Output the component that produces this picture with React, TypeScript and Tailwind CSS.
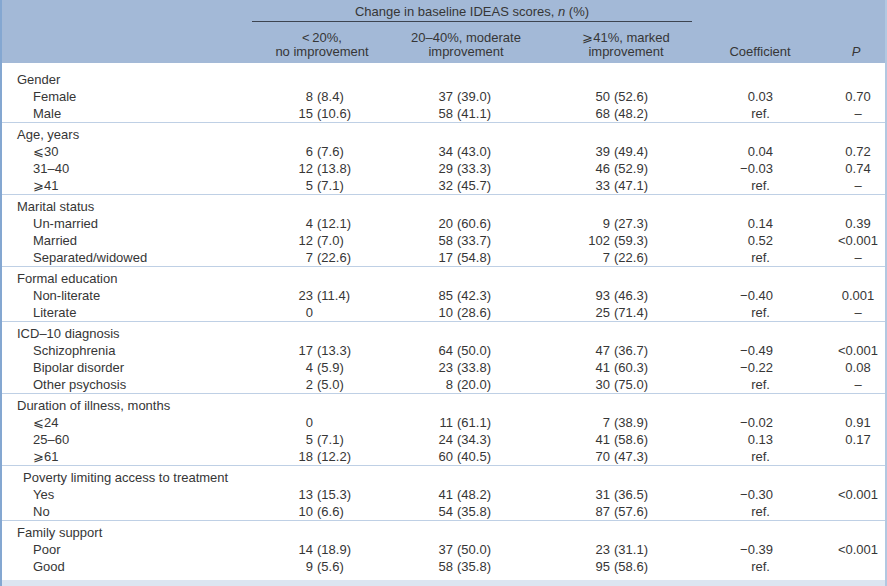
import React from "react";

type R = { label: string; c1?: string; c2?: string; c3?: string; coef?: string; p?: string };
type G = { title: string; titleCls?: string; rows: R[] };

const groups: G[] = [
  {
    title: "Gender",
    rows: [
      { label: "Female", c1: "8 (8.4)", c2: "37 (39.0)", c3: "50 (52.6)", coef: "0.03", p: "0.70" },
      { label: "Male", c1: "15 (10.6)", c2: "58 (41.1)", c3: "68 (48.2)", coef: "ref.", p: "–" },
    ],
  },
  {
    title: "Age, years",
    rows: [
      { label: "⩽30", c1: "6 (7.6)", c2: "34 (43.0)", c3: "39 (49.4)", coef: "0.04", p: "0.72" },
      { label: "31–40", c1: "12 (13.8)", c2: "29 (33.3)", c3: "46 (52.9)", coef: "−0.03", p: "0.74" },
      { label: "⩾41", c1: "5 (7.1)", c2: "32 (45.7)", c3: "33 (47.1)", coef: "ref.", p: "–" },
    ],
  },
  {
    title: "Marital status",
    rows: [
      { label: "Un-married", c1: "4 (12.1)", c2: "20 (60.6)", c3: "9 (27.3)", coef: "0.14", p: "0.39" },
      { label: "Married", c1: "12 (7.0)", c2: "58 (33.7)", c3: "102 (59.3)", coef: "0.52", p: "<0.001" },
      { label: "Separated/widowed", c1: "7 (22.6)", c2: "17 (54.8)", c3: "7 (22.6)", coef: "ref.", p: "–" },
    ],
  },
  {
    title: "Formal education",
    rows: [
      { label: "Non-literate", c1: "23 (11.4)", c2: "85 (42.3)", c3: "93 (46.3)", coef: "−0.40", p: "0.001" },
      { label: "Literate", c1: "0", c2: "10 (28.6)", c3: "25 (71.4)", coef: "ref.", p: "–" },
    ],
  },
  {
    title: "ICD–10 diagnosis",
    rows: [
      { label: "Schizophrenia", c1: "17 (13.3)", c2: "64 (50.0)", c3: "47 (36.7)", coef: "−0.49", p: "<0.001" },
      { label: "Bipolar disorder", c1: "4 (5.9)", c2: "23 (33.8)", c3: "41 (60.3)", coef: "−0.22", p: "0.08" },
      { label: "Other psychosis", c1: "2 (5.0)", c2: "8 (20.0)", c3: "30 (75.0)", coef: "ref.", p: "–" },
    ],
  },
  {
    title: "Duration of illness, months",
    rows: [
      { label: "⩽24", c1: "0", c2: "11 (61.1)", c3: "7 (38.9)", coef: "−0.02", p: "0.91" },
      { label: "25–60", c1: "5 (7.1)", c2: "24 (34.3)", c3: "41 (58.6)", coef: "0.13", p: "0.17" },
      { label: "⩾61", c1: "18 (12.2)", c2: "60 (40.5)", c3: "70 (47.3)", coef: "ref.", p: "" },
    ],
  },
  {
    title: "Poverty limiting access to treatment",
    titleCls: "pl-[21px]",
    rows: [
      { label: "Yes", c1: "13 (15.3)", c2: "41 (48.2)", c3: "31 (36.5)", coef: "−0.30", p: "<0.001" },
      { label: "No", c1: "10 (6.6)", c2: "54 (35.8)", c3: "87 (57.6)", coef: "ref.", p: "" },
    ],
  },
  {
    title: "Family support",
    rows: [
      { label: "Poor", c1: "14 (18.9)", c2: "37 (50.0)", c3: "23 (31.1)", coef: "−0.39", p: "<0.001" },
      { label: "Good", c1: "9 (5.6)", c2: "58 (35.8)", c3: "95 (58.6)", coef: "ref.", p: "" },
    ],
  },
];

const GRID = "grid grid-cols-[250px_140px_148px_164px_120px_61px]";

function Val({ v, pad, w }: { v?: string; pad: string; w: string }) {
  if (!v) return <div />;
  const i = v.indexOf(" (");
  const count = i >= 0 ? v.slice(0, i) : v;
  const rest = i >= 0 ? v.slice(i + 1) : "";
  return (
    <div className={`flex ${pad}`}>
      <span className={`${w} text-right`}>{count}</span>
      {rest && <span className="pl-[4px]">{rest}</span>}
    </div>
  );
}

function Row({ r }: { r: R }) {
  return (
    <div className={`${GRID} h-[17px] leading-[17px]`}>
      <div className="pl-[31px] whitespace-nowrap">{r.label}</div>
      <Val v={r.c1} pad="pl-[45px]" w="w-[16px]" />
      <Val v={r.c2} pad="pl-[45px]" w="w-[16px]" />
      <Val v={r.c3} pad="pl-[48px]" w="w-[22px]" />
      <div className={r.coef === "ref." ? "text-right pr-[54px]" : "text-right pr-[51px]"}>{r.coef}</div>
      <div className="text-center pl-[7px]">{r.p}</div>
    </div>
  );
}

export default function App() {
  return (
    <div
      className="w-[887px] h-[586px] bg-white text-[#363636] text-[13px] border-l-2 border-r-2 border-l-[#84a7d1] border-r-[#b2c8e1] flex flex-col overflow-hidden"
      style={{ fontFamily: '"Liberation Sans", Arial, sans-serif' }}
    >
      {/* header */}
      <div className={`${GRID} h-[63px] bg-[#a3b9d7] shrink-0`}>
        <div />
        <div className="col-span-3 flex flex-col">
          <div className="mr-[12px] h-[22px] border-b border-[#3d4450] text-center leading-[16px] pt-[4px]">
            Change in baseline IDEAS scores, <span className="italic">n</span> (%)
          </div>
          <div className="grid grid-cols-[140px_148px_164px] mt-[9px] leading-[14px] text-center">
            <div>
              <div>&lt;&thinsp;20%,</div>
              <div>no improvement</div>
            </div>
            <div>
              <div>20–40%, moderate</div>
              <div>improvement</div>
            </div>
            <div className="pl-[8px]">
              <div>⩾41%, marked</div>
              <div>improvement</div>
            </div>
          </div>
        </div>
        <div className="flex items-end justify-center pb-[4px] leading-[14px] pr-[8px]">Coefficient</div>
        <div className="flex items-end justify-center pb-[4px] leading-[14px] pl-[3px] italic">P</div>
      </div>

      {/* body */}
      <div className="flex flex-col">
        {groups.map((g, gi) => (
          <div
            key={gi}
            className={
              gi === 0
                ? "pt-[8px] border-b border-[#bfd0e5]"
                : gi === groups.length - 1
                ? "pt-[3px]"
                : "pt-[3px] border-b border-[#bfd0e5]"
            }
          >
            <div className={`h-[17px] leading-[17px] whitespace-nowrap ${g.titleCls ?? "pl-[15px]"}`}>{g.title}</div>
            {g.rows.map((r, ri) => (
              <Row key={ri} r={r} />
            ))}
          </div>
        ))}
      </div>
      <div className="flex-1" />
      <div className="h-[6px] bg-[#dce5f1] shrink-0" />
    </div>
  );
}
